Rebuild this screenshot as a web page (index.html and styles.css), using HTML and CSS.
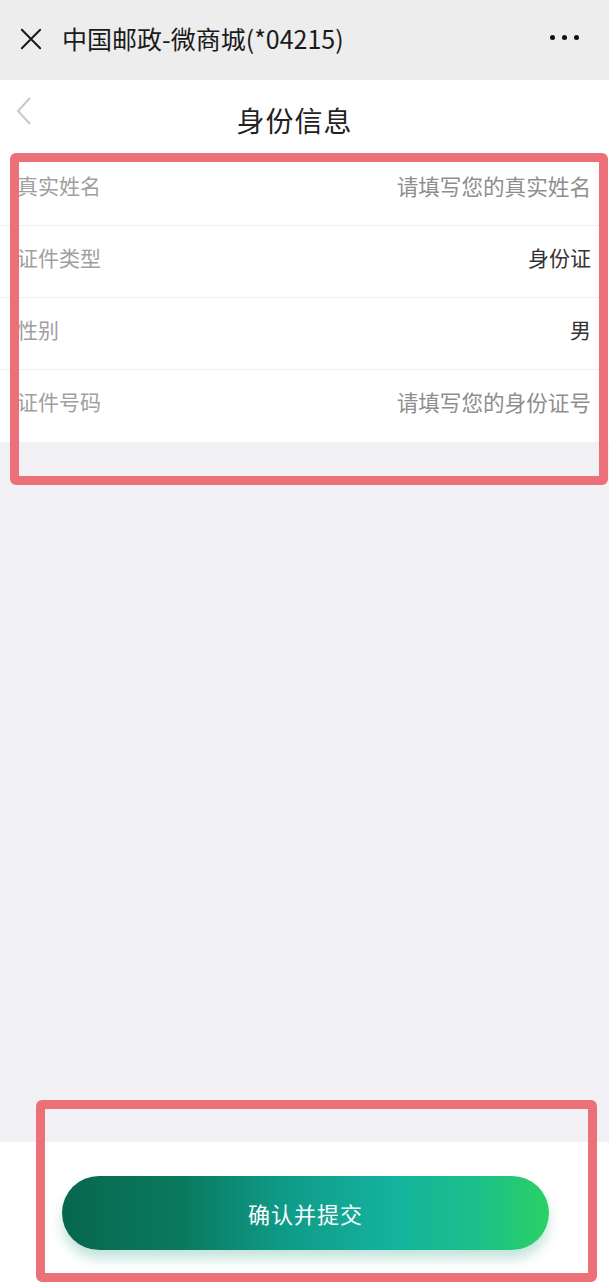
FILE: index.html
```html
<!DOCTYPE html>
<html lang="zh-CN">
<head>
<meta charset="utf-8">
<title>身份信息</title>
<link rel="stylesheet" href="styles.css">
</head>
<body>
<div class="page">
  <header class="wxbar">
    <svg class="wx-close" viewBox="0 0 24 24" width="24" height="24"><path d="M2 2 L22 22 M22 2 L2 22" stroke="#1a1a1a" stroke-width="2.2" fill="none" stroke-linecap="round"/></svg>
    <div class="wx-title">中国邮政-微商城(*04215)</div>
    <div class="wx-more"><span></span><span></span><span></span></div>
  </header>
  <nav class="navbar">
    <svg class="nav-back" viewBox="0 0 18 30" width="18" height="30"><path d="M15 2 L3 15 L15 28" stroke="#c8c8c8" stroke-width="2" fill="none"/></svg>
    <div class="nav-title">身份信息</div>
  </nav>
  <section class="form">
    <div class="row"><span class="label">真实姓名</span><span class="value placeholder">请填写您的真实姓名</span></div>
    <div class="row"><span class="label">证件类型</span><span class="value">身份证</span></div>
    <div class="row"><span class="label">性别</span><span class="value">男</span></div>
    <div class="row"><span class="label">证件号码</span><span class="value placeholder">请填写您的身份证号</span></div>
  </section>
  <div class="spacer"></div>
  <footer class="footer">
    <button class="submit">确认并提交</button>
  </footer>
  <div class="mark mark-form"></div>
  <div class="mark mark-footer"></div>
</div>
</body>
</html>
```
FILE: styles.css
```css
* { box-sizing: border-box; }
html, body { margin: 0; padding: 0; }
body {
  font-family: "Noto Sans CJK SC", "Noto Sans", sans-serif;
  background: #f1f0f4;
}
.page {
  position: relative;
  width: 609px;
  height: 1284px;
  display: flex;
  flex-direction: column;
  overflow: hidden;
}
.wxbar {
  height: 80px;
  background: #ededed;
  display: flex;
  align-items: center;
  padding: 0 30px 0 20px;
}
.wx-close { width: 22px; height: 22px; margin-top: -2px; }
.wx-title {
  margin-left: 20px;
  font-size: 25px;
  color: #1a1a1a;
  flex: 1;
  margin-top: -4px;
}
.wx-more { display: flex; gap: 7px; margin-top: -6px; }
.wx-more span { width: 5px; height: 5px; border-radius: 50%; background: #111; }
.navbar {
  height: 74px;
  background: #fff;
  display: flex;
  align-items: center;
  justify-content: center;
  position: relative;
}
.nav-back { position: absolute; left: 15px; top: 16px; }
.nav-title { font-size: 28px; color: #222; letter-spacing: 1px; margin-top: 6px; margin-right: 20px; }
.form { background: #fff; }
.row {
  height: 72px;
  display: flex;
  justify-content: space-between;
  align-items: flex-start;
  padding: 16px 18px 0 17px;
  border-bottom: 1px solid #f0f0f0;
  font-size: 21px;
}
.row:last-child { border-bottom: none; }
.label { color: #a0a0a0; }
.value { color: #333; }
.value.placeholder { color: #8e8e8e; font-size: 21.6px; }
.spacer { flex: 1; }
.footer {
  height: 142px;
  background: #fff;
  display: flex;
  justify-content: center;
  padding-top: 34px;
}
.submit {
  width: 487px;
  height: 74px;
  margin-left: 2px;
  border: none;
  border-radius: 37px;
  font-family: inherit;
  font-size: 22px;
  color: #fff;
  letter-spacing: 1px;
  background: linear-gradient(90deg, #07674e 0%, #0a7a5f 25%, #0f9a88 45%, #14b39e 68%, #1cbf8a 85%, #2ad165 100%);
  box-shadow: 0 9px 12px rgba(40, 160, 130, 0.28);
}
.mark {
  position: absolute;
  border: 9px solid #ec7078;
  border-radius: 6px;
  pointer-events: none;
}
.mark-form { left: 10px; top: 153px; width: 598px; height: 332px; }
.mark-footer { left: 36px; top: 1100px; width: 561px; height: 182px; }
```
